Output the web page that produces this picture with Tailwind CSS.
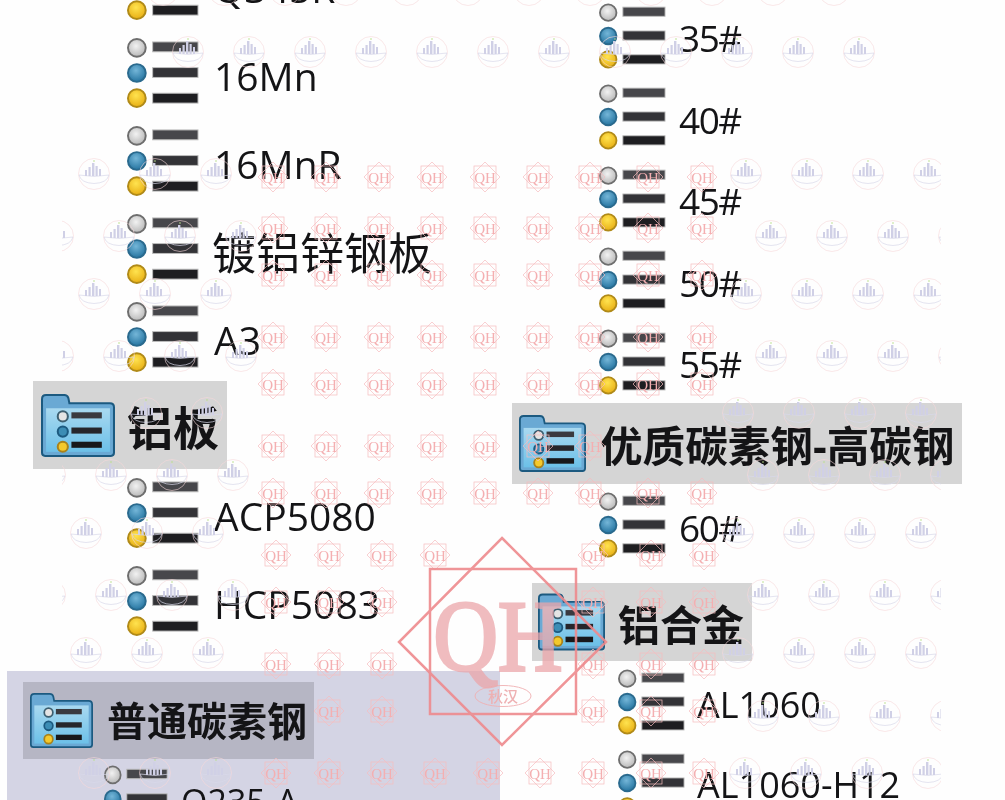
<!DOCTYPE html>
<html><head><meta charset="utf-8"><script src="https://cdn.jsdelivr.net/npm/@tailwindcss/browser@4"></script></head>
<body class="bg-white">
<svg class="absolute w-0 h-0" aria-hidden="true"><defs>
<radialGradient id="gg" cx=".45" cy=".4" r=".65"><stop offset="0" stop-color="#f2f2f2"/><stop offset="1" stop-color="#b4b4b4"/></radialGradient>
<radialGradient id="gb" cx=".45" cy=".35" r=".7"><stop offset="0" stop-color="#74b6d8"/><stop offset="1" stop-color="#1f6f9c"/></radialGradient>
<radialGradient id="gy" cx=".45" cy=".35" r=".7"><stop offset="0" stop-color="#ffe34f"/><stop offset="1" stop-color="#e6ab10"/></radialGradient>
<linearGradient id="gp" x1="0" y1="0" x2="0" y2="1"><stop offset="0" stop-color="#a9d9f0"/><stop offset="1" stop-color="#6cc0e8"/></linearGradient>
<g id="rows">
<circle cx="10" cy="10.5" r="9" fill="url(#gg)" stroke="#6e6e6e" stroke-width="2"/>
<circle cx="10" cy="36" r="9" fill="url(#gb)" stroke="#2a6a8e" stroke-width="2"/>
<circle cx="10" cy="61.5" r="9" fill="url(#gy)" stroke="#b08a18" stroke-width="2"/>
<rect x="26" y="4.5" width="46" height="10" fill="#47474b" stroke="#bdbdbd" stroke-width="1"/>
<rect x="26" y="30.5" width="46" height="10" fill="#333337" stroke="#bdbdbd" stroke-width="1"/>
<rect x="26" y="56.5" width="46" height="10" fill="#1e1e21" stroke="#bdbdbd" stroke-width="1"/>
</g>
<g id="folder">
<path d="M1 5 Q1 1 5 1 H23 Q26 1 27 4 L28 9 H68 Q72 9 72 13 V58 Q72 61 69 61 H4 Q1 61 1 58 Z" fill="#6aa9d4" stroke="#1c5a80" stroke-width="2"/>
<rect x="5" y="14" width="63" height="43" fill="url(#gp)"/>
<circle cx="21.5" cy="22" r="5" fill="#e4e4e4" stroke="#3d5f70" stroke-width="2"/>
<circle cx="21.5" cy="37" r="5" fill="#3c8db5" stroke="#1c5a80" stroke-width="2"/>
<circle cx="21.5" cy="52" r="5" fill="#f4c92c" stroke="#a8821c" stroke-width="2"/>
<rect x="30" y="18" width="30" height="6" fill="#3a3a40"/>
<rect x="30" y="33" width="30" height="6" fill="#26262b"/>
<rect x="30" y="47" width="30" height="6" fill="#18181b"/>
</g>
<g id="q" fill="none" stroke="#f6bcbe" stroke-width=".7">
<rect x="-11" y="-11" width="22" height="22"/>
<path d="M0 -15 L15 0 L0 15 L-15 0 Z"/>
<text x="0" y="5.5" text-anchor="middle" font-family="Liberation Serif, serif" font-size="15" fill="#f4afb1" stroke="none">QH</text>
</g>
<g id="l" fill="none">
<circle r="15.5" stroke="#f6d8da" stroke-width=".6"/>
<path d="M-15 1 Q0 4 15 1 Q13 9 0 9.5 Q-13 9 -15 1 Z" stroke="#d8d8ea" stroke-width=".7"/>
<g fill="#d0d0e6"><rect x="-9" y="-4" width="2" height="6"/><rect x="-5.5" y="-7" width="2.2" height="9"/><rect x="-2" y="-11" width="2.4" height="13"/><rect x="1.5" y="-8" width="2.2" height="10"/><rect x="5" y="-5" width="2" height="7"/></g>
<circle cy="-13" r=".8" fill="#b8e08a"/>
</g>
<clipPath id="wc"><rect x="62" y="-20" width="879" height="840"/></clipPath>
</defs></svg>

<div class="relative w-[1005px] h-[800px] overflow-hidden bg-[#fefefe] flex text-[#141416] font-['Open_Sans','Noto_Sans_CJK_SC',sans-serif] text-[39px] font-medium leading-none">
  <div class="w-[512px] shrink-0 -mt-[59px] flex flex-col blur-[0.5px]">
    <div class="h-[88px] shrink-0 flex items-center gap-[15px] pl-[127px]"><svg class="w-[72px] h-[72px] shrink-0" viewBox="0 0 73 72"><use href="#rows"/></svg><span class="pt-1">Q345R</span></div>
    <div class="h-[88px] shrink-0 flex items-center gap-[15px] pl-[127px]"><svg class="w-[72px] h-[72px] shrink-0" viewBox="0 0 73 72"><use href="#rows"/></svg><span class="pt-1">16Mn</span></div>
    <div class="h-[88px] shrink-0 flex items-center gap-[15px] pl-[127px]"><svg class="w-[72px] h-[72px] shrink-0" viewBox="0 0 73 72"><use href="#rows"/></svg><span class="pt-1">16MnR</span></div>
    <div class="h-[88px] shrink-0 flex items-center gap-[13px] pl-[127px]"><svg class="w-[72px] h-[72px] shrink-0" viewBox="0 0 73 72"><use href="#rows"/></svg><span class="text-[44px] font-normal pt-2">镀铝锌钢板</span></div>
    <div class="h-[88px] shrink-0 flex items-center gap-[15px] pl-[127px]"><svg class="w-[72px] h-[72px] shrink-0" viewBox="0 0 73 72"><use href="#rows"/></svg><span class="pt-1">A3</span></div>
    <div class="h-[88px] shrink-0 ml-[33px] w-[194px] bg-[#d5d5d5] flex items-center gap-[12px] pl-2 font-bold text-[46px]"><svg class="w-[74px] h-[63px] shrink-0" viewBox="0 0 73 62"><use href="#folder"/></svg><span class="pt-1">铝板</span></div>
    <div class="h-[88px] shrink-0 flex items-center gap-[15px] pl-[127px]"><svg class="w-[72px] h-[72px] shrink-0" viewBox="0 0 73 72"><use href="#rows"/></svg><span class="pt-1">ACP5080</span></div>
    <div class="h-[88px] shrink-0 flex items-center gap-[15px] pl-[127px]"><svg class="w-[72px] h-[72px] shrink-0" viewBox="0 0 73 72"><use href="#rows"/></svg><span class="pt-1">HCP5083</span></div>
    <div class="mt-[26px] ml-[7px] w-[493px] flex-1 bg-[#d4d4e4] pt-[11px]">
      <div class="ml-4 w-[291px] h-[77px] bg-[#b6b6c4] flex items-center gap-[14px] pl-[7px] font-bold text-[40px]"><svg class="w-[63px] h-[55px] shrink-0" viewBox="0 0 73 62" preserveAspectRatio="none"><use href="#folder"/></svg><span>普通碳素钢</span></div>
      <div class="h-[80px] flex items-center gap-[13px] pl-[97px] text-[34px]"><svg class="w-[64px] h-[68px] shrink-0" viewBox="0 0 73 72" preserveAspectRatio="none"><use href="#rows"/></svg><span class="pt-1">Q235-A</span></div>
    </div>
  </div>
  <div class="flex-1 -mt-[5px] flex flex-col blur-[0.5px]">
    <div class="h-[81.5px] shrink-0 flex items-center gap-[13px] pl-[87px]"><svg class="w-[67px] h-[66px] shrink-0" viewBox="0 0 73 72"><use href="#rows"/></svg><span class="pt-1 text-[37px] tracking-[-1.5px]">35#</span></div>
    <div class="h-[81.5px] shrink-0 flex items-center gap-[13px] pl-[87px]"><svg class="w-[67px] h-[66px] shrink-0" viewBox="0 0 73 72"><use href="#rows"/></svg><span class="pt-1 text-[37px] tracking-[-1.5px]">40#</span></div>
    <div class="h-[81.5px] shrink-0 flex items-center gap-[13px] pl-[87px]"><svg class="w-[67px] h-[66px] shrink-0" viewBox="0 0 73 72"><use href="#rows"/></svg><span class="pt-1 text-[37px] tracking-[-1.5px]">45#</span></div>
    <div class="h-[81.5px] shrink-0 flex items-center gap-[13px] pl-[87px]"><svg class="w-[67px] h-[66px] shrink-0" viewBox="0 0 73 72"><use href="#rows"/></svg><span class="pt-1 text-[37px] tracking-[-1.5px]">50#</span></div>
    <div class="h-[81.5px] shrink-0 flex items-center gap-[13px] pl-[87px]"><svg class="w-[67px] h-[66px] shrink-0" viewBox="0 0 73 72"><use href="#rows"/></svg><span class="pt-1 text-[37px] tracking-[-1.5px]">55#</span></div>
    <div class="h-[81.5px] shrink-0 w-[450px] bg-[#d5d5d5] flex items-center gap-[14px] pl-[7px] font-bold text-[42.6px]"><svg class="w-[67px] h-[57px] shrink-0" viewBox="0 0 73 62"><use href="#folder"/></svg><span class="whitespace-nowrap pt-1">优质碳素钢-高碳钢</span></div>
    <div class="h-[82px] shrink-0 flex items-center gap-[13px] pl-[87px]"><svg class="w-[67px] h-[66px] shrink-0" viewBox="0 0 73 72"><use href="#rows"/></svg><span class="pt-1 text-[37px] tracking-[-1.5px]">60#</span></div>
    <div class="mt-[17px] h-[78px] shrink-0 ml-5 w-[220px] bg-[#d5d5d5] flex items-center gap-[13px] pl-[6px] font-bold text-[42px]"><svg class="w-[67px] h-[58px] shrink-0" viewBox="0 0 73 62"><use href="#folder"/></svg><span class="pt-[6px]">铝合金</span></div>
    <div class="h-[82px] shrink-0 flex items-center gap-[12px] pl-[106px]"><svg class="w-[67px] h-[66px] shrink-0" viewBox="0 0 73 72"><use href="#rows"/></svg><span class="pt-[6px] text-[36px]">AL1060</span></div>
    <div class="h-[80px] shrink-0 flex items-center gap-[12px] pl-[106px]"><svg class="w-[67px] h-[66px] shrink-0" viewBox="0 0 73 72"><use href="#rows"/></svg><span class="pt-1 text-[36px] whitespace-nowrap">AL1060-H12</span></div>
  </div>

  <svg class="absolute inset-0 w-[1005px] h-[800px] pointer-events-none blur-[0.3px]" viewBox="0 0 1005 800" aria-hidden="true">
    <g clip-path="url(#wc)">
      <g transform="translate(0,-10)"><use href="#l" x="163"/><use href="#l" x="224"/><use href="#l" x="285"/><use href="#l" x="346"/><use href="#l" x="407"/><use href="#l" x="468"/><use href="#l" x="529"/><use href="#l" x="590"/><use href="#l" x="651"/><use href="#l" x="712"/><use href="#l" x="773"/><use href="#l" x="834"/></g>
      <g transform="translate(0,52)"><use href="#l" x="188"/><use href="#l" x="249"/><use href="#l" x="310"/><use href="#l" x="371"/><use href="#l" x="432"/><use href="#l" x="493"/><use href="#l" x="554"/><use href="#l" x="615"/><use href="#l" x="676"/><use href="#l" x="737"/><use href="#l" x="798"/><use href="#l" x="859"/></g>
      <g transform="translate(0,174)"><use href="#l" x="94"/><use href="#l" x="155"/><use href="#l" x="216"/><use href="#l" x="746"/><use href="#l" x="807"/><use href="#l" x="868"/><use href="#l" x="929"/></g>
      <g transform="translate(0,236)"><use href="#l" x="58"/><use href="#l" x="119"/><use href="#l" x="180"/><use href="#l" x="241"/><use href="#l" x="771"/><use href="#l" x="832"/><use href="#l" x="893"/><use href="#l" x="954"/></g>
      <g transform="translate(0,294)"><use href="#l" x="94"/><use href="#l" x="155"/><use href="#l" x="216"/><use href="#l" x="746"/><use href="#l" x="807"/><use href="#l" x="868"/><use href="#l" x="929"/></g>
      <g transform="translate(0,356)"><use href="#l" x="58"/><use href="#l" x="119"/><use href="#l" x="180"/><use href="#l" x="241"/><use href="#l" x="771"/><use href="#l" x="832"/><use href="#l" x="893"/><use href="#l" x="954"/></g>
      <g transform="translate(0,413)"><use href="#l" x="146"/><use href="#l" x="207"/><use href="#l" x="738"/><use href="#l" x="799"/><use href="#l" x="860"/><use href="#l" x="921"/></g>
      <g transform="translate(0,475)"><use href="#l" x="50"/><use href="#l" x="111"/><use href="#l" x="172"/><use href="#l" x="233"/><use href="#l" x="763"/><use href="#l" x="824"/><use href="#l" x="885"/><use href="#l" x="946"/></g>
      <g transform="translate(0,533)"><use href="#l" x="86"/><use href="#l" x="147"/><use href="#l" x="208"/><use href="#l" x="738"/><use href="#l" x="799"/><use href="#l" x="860"/><use href="#l" x="921"/></g>
      <g transform="translate(0,595)"><use href="#l" x="50"/><use href="#l" x="111"/><use href="#l" x="172"/><use href="#l" x="233"/><use href="#l" x="763"/><use href="#l" x="824"/><use href="#l" x="885"/><use href="#l" x="946"/></g>
      <g transform="translate(0,653)"><use href="#l" x="86"/><use href="#l" x="147"/><use href="#l" x="208"/><use href="#l" x="738"/><use href="#l" x="799"/><use href="#l" x="860"/><use href="#l" x="921"/></g>
      <g transform="translate(0,716)"><use href="#l" x="763"/><use href="#l" x="824"/><use href="#l" x="885"/><use href="#l" x="946"/></g>
      <g transform="translate(0,773)"><use href="#l" x="94"/><use href="#l" x="155"/><use href="#l" x="216"/><use href="#l" x="745"/><use href="#l" x="806"/><use href="#l" x="867"/><use href="#l" x="928"/></g>
    </g>
    <g transform="translate(0,177)"><use href="#q" x="273"/><use href="#q" x="326"/><use href="#q" x="379"/><use href="#q" x="432"/><use href="#q" x="485"/><use href="#q" x="538"/><use href="#q" x="590"/><use href="#q" x="648"/><use href="#q" x="702"/></g>
    <g transform="translate(0,228)"><use href="#q" x="273"/><use href="#q" x="326"/><use href="#q" x="379"/><use href="#q" x="432"/><use href="#q" x="485"/><use href="#q" x="538"/><use href="#q" x="590"/><use href="#q" x="648"/><use href="#q" x="702"/></g>
    <g transform="translate(0,275)"><use href="#q" x="273"/><use href="#q" x="326"/><use href="#q" x="379"/><use href="#q" x="432"/><use href="#q" x="485"/><use href="#q" x="538"/><use href="#q" x="590"/><use href="#q" x="648"/><use href="#q" x="702"/></g>
    <g transform="translate(0,337)"><use href="#q" x="273"/><use href="#q" x="326"/><use href="#q" x="379"/><use href="#q" x="432"/><use href="#q" x="485"/><use href="#q" x="538"/><use href="#q" x="590"/><use href="#q" x="648"/><use href="#q" x="702"/></g>
    <g transform="translate(0,384)"><use href="#q" x="273"/><use href="#q" x="326"/><use href="#q" x="379"/><use href="#q" x="432"/><use href="#q" x="485"/><use href="#q" x="538"/><use href="#q" x="590"/><use href="#q" x="648"/><use href="#q" x="702"/></g>
    <g transform="translate(0,446)"><use href="#q" x="273"/><use href="#q" x="326"/><use href="#q" x="379"/><use href="#q" x="432"/><use href="#q" x="485"/><use href="#q" x="538"/><use href="#q" x="590"/></g>
    <g transform="translate(0,493)"><use href="#q" x="273"/><use href="#q" x="326"/><use href="#q" x="379"/><use href="#q" x="432"/><use href="#q" x="485"/><use href="#q" x="538"/><use href="#q" x="590"/><use href="#q" x="648"/><use href="#q" x="702"/></g>
    <g transform="translate(0,555)"><use href="#q" x="276"/><use href="#q" x="329"/><use href="#q" x="382"/><use href="#q" x="435"/><use href="#q" x="593"/><use href="#q" x="651"/><use href="#q" x="704"/></g>
    <g transform="translate(0,602)"><use href="#q" x="276"/><use href="#q" x="329"/><use href="#q" x="382"/><use href="#q" x="593"/><use href="#q" x="651"/><use href="#q" x="704"/></g>
    <g transform="translate(0,664)"><use href="#q" x="276"/><use href="#q" x="329"/><use href="#q" x="382"/><use href="#q" x="593"/><use href="#q" x="651"/><use href="#q" x="704"/></g>
    <g transform="translate(0,711)"><use href="#q" x="329"/><use href="#q" x="382"/><use href="#q" x="593"/><use href="#q" x="651"/><use href="#q" x="704"/></g>
    <g transform="translate(0,773)"><use href="#q" x="276"/><use href="#q" x="329"/><use href="#q" x="382"/><use href="#q" x="435"/><use href="#q" x="488"/><use href="#q" x="540"/><use href="#q" x="593"/><use href="#q" x="651"/><use href="#q" x="704"/></g>
    <g fill="none" stroke="#ee8a8d" stroke-width="2.5" opacity=".9">
      <rect x="430" y="569" width="146" height="145"/>
      <path d="M502 538 L606 642 L502 745 L399 642 Z"/>
      <ellipse cx="503" cy="696" rx="28" ry="10.5" stroke="#f0b0b2" stroke-width="1"/>
    </g>
    <text transform="translate(498,671) scale(.95,1.08)" text-anchor="middle" font-family="Liberation Serif, serif" font-size="94" fill="#eba6aa" stroke="#eba6aa" stroke-width="3" opacity=".75">QH</text>
    <text x="503" y="702" text-anchor="middle" font-family="Noto Sans CJK SC, sans-serif" font-size="15" fill="#eeb0b2">秋汉</text>
  </svg>
</div>
</body></html>
